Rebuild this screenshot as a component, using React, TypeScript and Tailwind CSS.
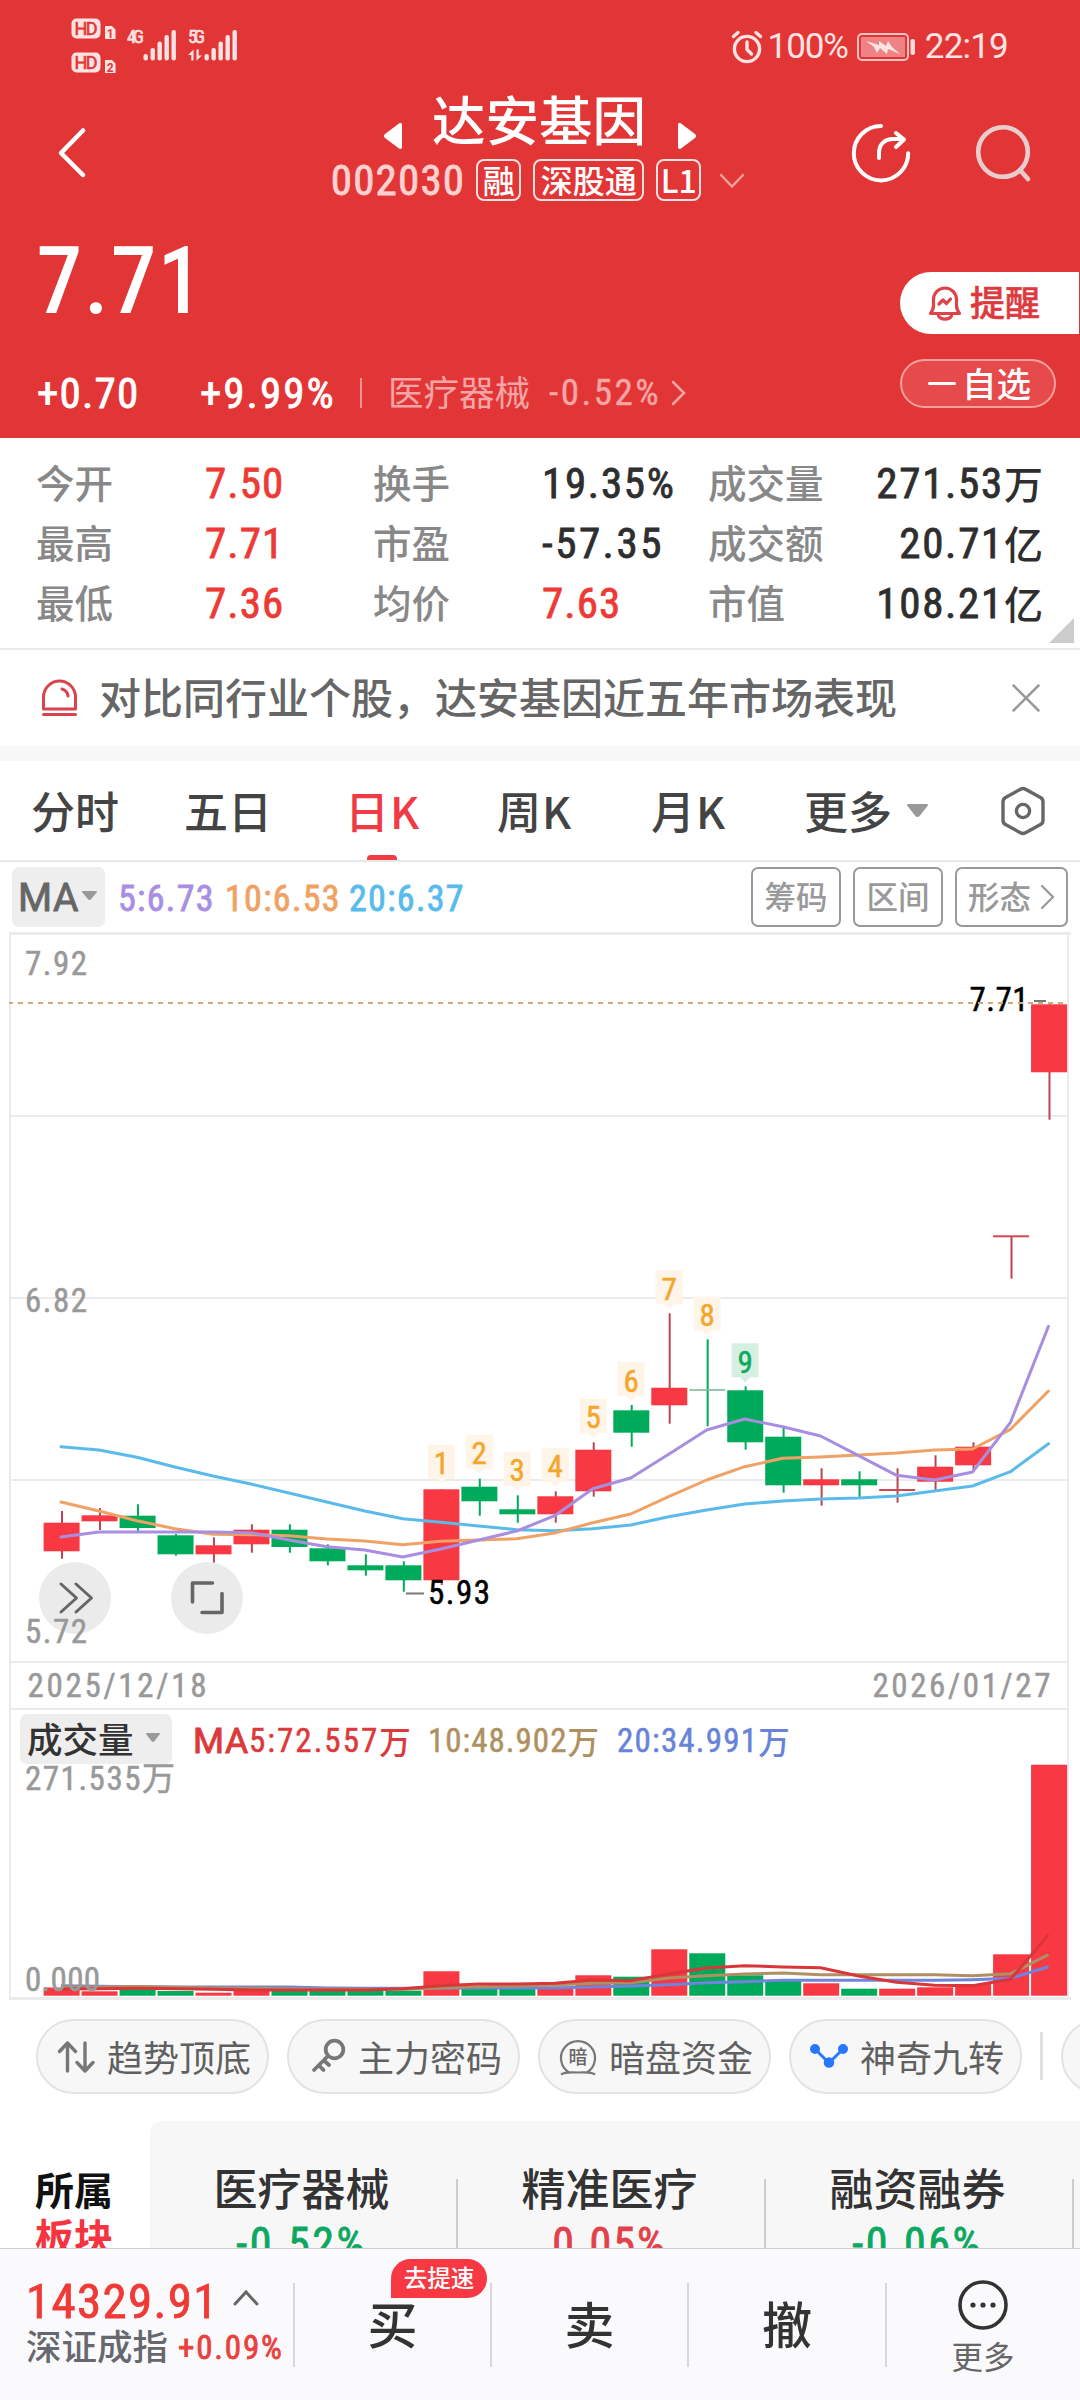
import type { ReactNode } from 'react'

const CJK = "font-['Noto_Sans_CJK_SC',sans-serif]"
const NUM = "font-['Roboto_Condensed','Noto_Sans_CJK_SC',sans-serif] [-webkit-text-stroke:0.8px]"

const RED = '#f83842'
const GREEN = '#00aa5b'

/* Candle: [direction, body top, body bottom, wick top, wick bottom, volume top] */
type Candle = ['r' | 'g', number, number, number, number, number]
const candles: Candle[] = [
  ['r', 1522.7, 1551.3, 1511, 1558.7, 1987.5],
  ['r', 1515.3, 1521.3, 1508, 1530, 1991.3],
  ['g', 1515.7, 1528, 1504.3, 1531.7, 1989],
  ['g', 1535.3, 1554.3, 1534, 1555.7, 1991],
  ['r', 1545.3, 1554.3, 1537.3, 1562.7, 1992.7],
  ['r', 1529.7, 1544.3, 1524.3, 1552.7, 1989],
  ['g', 1529.7, 1547, 1524.3, 1552.7, 1990.7],
  ['g', 1548.3, 1561.3, 1544.3, 1565.3, 1991],
  ['g', 1565.3, 1570.3, 1554.3, 1575.7, 1991],
  ['g', 1565.3, 1580.3, 1561.3, 1591.7, 1990.7],
  ['r', 1489.3, 1580.3, 1489.3, 1585, 1971.3],
  ['g', 1486.7, 1501.3, 1478.7, 1515.7, 1989],
  ['g', 1509.3, 1514.3, 1495.3, 1522.7, 1987.5],
  ['r', 1496.3, 1514.3, 1491.3, 1522.7, 1986.7],
  ['r', 1449.7, 1491.3, 1442.3, 1496.7, 1975.3],
  ['g', 1410.3, 1432.7, 1405, 1446.7, 1976.7],
  ['r', 1387.7, 1405.3, 1313.3, 1423.7, 1949.3],
  ['g', 1389.2, 1390.8, 1339.3, 1426.3, 1953.3],
  ['g', 1390.3, 1442.3, 1386.3, 1449.7, 1975.3],
  ['g', 1436.7, 1485.3, 1425.7, 1492.7, 1980],
  ['r', 1479.3, 1485.3, 1468.3, 1505.7, 1983.3],
  ['g', 1479.3, 1485.3, 1471.3, 1497.3, 1988.7],
  ['r', 1489, 1491, 1468.3, 1502.7, 1988.7],
  ['r', 1466.7, 1481.7, 1455.3, 1490, 1987.3],
  ['r', 1446.7, 1465.3, 1442.3, 1470, 1984],
  ['r', 1235.3, 1237.3, 1236, 1278.7, 1954.3],
  ['r', 1004.3, 1072.3, 1004.3, 1119.7, 1764.7],
]

const ma20 = [1446.7, 1450, 1457.3, 1467, 1476, 1484, 1493, 1502, 1511, 1518.7, 1522.3, 1526, 1529.7, 1530.7, 1528.7, 1525, 1516.7, 1510, 1504, 1501, 1499, 1498, 1496, 1491, 1486, 1471.7, 1443.7]
const ma10 = [1502, 1511, 1520.7, 1528.7, 1534.3, 1534.7, 1535.7, 1539, 1541, 1544.7, 1541.3, 1540, 1538.7, 1533, 1522.7, 1514, 1496.7, 1480, 1466.7, 1458.3, 1457, 1455, 1453, 1450, 1449, 1429.3, 1391]
const ma5 = [1537, 1532, 1532, 1532, 1532, 1532.7, 1540, 1546.7, 1550, 1557, 1549, 1540, 1531, 1515.7, 1488.7, 1478, 1454.3, 1430, 1419, 1426.7, 1436, 1455.7, 1475.3, 1480, 1472, 1422.3, 1326.3]

const vol5 = [1989, 1988.7, 1988.3, 1988.7, 1989.3, 1990, 1990, 1990, 1990, 1988.7, 1985.7, 1984, 1984, 1983.3, 1980, 1980.7, 1974, 1968, 1965.7, 1967, 1967.7, 1976, 1982.3, 1985.3, 1985.7, 1979.3, 1934.7]
const vol10 = [1987, 1987, 1986.5, 1987.3, 1988, 1988.3, 1988.7, 1989, 1989.3, 1989.3, 1988, 1986.7, 1986, 1985, 1983.3, 1982.7, 1978, 1975.7, 1974, 1973, 1974.7, 1974.7, 1974.7, 1974.7, 1975.7, 1973.7, 1954.7]
const vol20 = [1985.7, 1986.3, 1986.7, 1987, 1987, 1987, 1987, 1988, 1988.3, 1988.3, 1988.3, 1988, 1988, 1988, 1987, 1986, 1984.7, 1982.7, 1981.7, 1980.3, 1980.3, 1980.3, 1980.3, 1980.3, 1979.7, 1978.3, 1966.7]

const cx = (i: number) => 62 + i * 37.98
const line = (ys: number[]) => ys.map((y, i) => `${cx(i) - 1},${y}`).join(' ')

/* Nine-turn counter tags: [candle index, label, top] */
const tags: [number, string, number][] = [
  [10, '1', 1445.3], [11, '2', 1435.3], [12, '3', 1452.3], [13, '4', 1448.3], [14, '5', 1399.3],
  [15, '6', 1362.7], [16, '7', 1270.7], [17, '8', 1297], [18, '9', 1343.7],
]

function SvgNum({ x, y, w, size = 33, fill = '#999', anchor, children }: { x: number; y: number; w?: number; size?: number; fill?: string; anchor?: 'middle'; children: string }) {
  return (
    <text x={x} y={y} textLength={w} fontSize={size} fill={fill} stroke={fill} strokeWidth={0.5} textAnchor={anchor} className="font-['Roboto_Condensed','Noto_Sans_CJK_SC',sans-serif]">
      {children}
    </text>
  )
}

function Caret({ w, h, color = '#999' }: { w: number; h: number; color?: string }) {
  return (
    <svg width={w} height={h} viewBox="0 0 20 13" preserveAspectRatio="none" fill={color}>
      <path d="M1 0h18c1 0 1.3 1 .7 1.8L12 12c-1 1.2-3 1.2-4 0L.3 1.8C-.3 1 0 0 1 0z" />
    </svg>
  )
}

function SignalBars({ x }: { x: number }) {
  const tops = [55, 49, 42.5, 36, 31]
  return (
    <>
      {tops.map((t, i) => (
        <rect key={i} x={x + i * 7} y={t} width={4.4} height={61.5 - t} rx={2} />
      ))}
    </>
  )
}

function StatusBar() {
  return (
    <div className="flex h-[90px] items-center pl-[70px] pr-[72px] pt-[4px] text-[#ffe3e3]">
      <svg className="mt-[-2px]" width="172" height="60" viewBox="70 17 172 60" fill="#ffe3e3">
        <rect x="71.500" y="19.500" width="29" height="20" rx="5" />
        <rect x="71.500" y="53.500" width="29" height="20" rx="5" />
        <g className="font-['Roboto']" fill="#e23636" stroke="#e23636" strokeWidth="0.600">
          <text x="74.500" y="36" fontSize="18" textLength="23">HD</text>
          <text x="74.500" y="70" fontSize="18" textLength="23">HD</text>
        </g>
        <path d="M105 27h7l3.500 3.500v9.500h-10.500zM105 61h7l3.500 3.500v9.500h-10.500z" />
        <text x="106.800" y="38.500" fontSize="12" fontWeight="700" fill="#e23636" className="font-['Roboto']">1</text>
        <text x="106.800" y="72.500" fontSize="12" fontWeight="700" fill="#e23636" className="font-['Roboto']">2</text>
        <g className="font-['Roboto_Condensed']" stroke="#ffe3e3" strokeWidth="0.600">
          <text x="127" y="44.300" fontSize="18.500" textLength="17">4G</text>
          <text x="188" y="44.300" fontSize="18.500" textLength="17">5G</text>
        </g>
        <SignalBars x={143.500} />
        <SignalBars x={204.500} />
        <path d="M188 56l5.500-5.500v11h-2.200v-5.500zM202 56.500l-5.500 5v-11h2.200v6z" />
      </svg>
      <div className="ml-auto flex items-center">
        <svg width="32" height="34" viewBox="0 0 32 34" fill="none" stroke="#ffe3e3" strokeWidth="3.400" strokeLinecap="round">
          <circle cx="16" cy="19" r="12.600" />
          <path d="M16 12v7.500l4.500 4.500M2.500 6.500l4.500-4M29.500 6.500l-4.500-4" />
        </svg>
        <span className="ml-[5px] font-['Roboto'] text-[35px] leading-[40px] tracking-[-1.1px]">100%</span>
        <svg className="ml-[9px]" width="59" height="30" viewBox="0 0 59 30">
          <rect x="1" y="2" width="50" height="26" rx="4" fill="none" stroke="#f9c2c2" strokeWidth="2" />
          <rect x="4" y="5" width="44" height="20" rx="1" fill="#ee8285" />
          <path d="M9 9l13 4 0-4 7 5 2-5 4 6 8 7-12-5-1 5-7-6-3 5-3-6z" fill="#ffe3e3" />
          <rect x="53.500" y="7" width="4.500" height="16" rx="2" fill="#ffd9d9" />
        </svg>
        <span className="ml-[9px] font-['Roboto'] text-[35px] leading-[40px] tracking-[-0.8px]">22:19</span>
      </div>
    </div>
  )
}

function Badge({ w, children }: { w: string; children: ReactNode }) {
  return (
    <span className={`flex h-[42px] shrink-0 items-center justify-center rounded-[8px] border-2 border-[#ffe0e0] pb-[3px] text-[32px] font-medium leading-[36px] text-white ${w} ${CJK}`}>
      {children}
    </span>
  )
}

function NavBar() {
  return (
    <div className="flex h-[115px] text-white">
      <div className="w-[300px] pl-[56px] pt-[36px]">
        <svg width="32" height="54" viewBox="0 0 32 54" fill="none" stroke="#fff" strokeWidth="4.500" strokeLinecap="round" strokeLinejoin="round">
          <path d="M27 4.500L5 27l22 22" />
        </svg>
      </div>
      <div className="flex flex-1 flex-col items-center">
        <div className="flex h-[64px] items-center">
          <svg className="mt-[27px]" width="18" height="26" viewBox="0 0 18 26" fill="#fff"><path d="M18 2v22c0 2-1.500 2.500-3 1.500L1 15c-1.300-1.200-1.300-2.800 0-4L15 .5c1.500-1 3-.5 3 1.500z" /></svg>
          <h1 className={`ml-[30px] mr-[32px] mt-[-8px] text-[53.500px] font-medium leading-[60px] ${CJK}`}>达安基因</h1>
          <svg className="mt-[27px]" width="18" height="26" viewBox="0 0 18 26" fill="#fff"><path d="M0 2v22c0 2 1.500 2.500 3 1.500L17 15c1.300-1.200 1.300-2.800 0-4L3 .5C1.500-.5 0 0 0 2z" /></svg>
        </div>
        <div className="mt-[5px] flex h-[42px] items-center whitespace-nowrap pr-[4px]">
          <span className={`text-[43px] leading-[42px] tracking-[1.2px] text-[#ffd0d0] ${NUM}`}>002030</span>
          <div className="ml-[11px] flex gap-[12px]">
            <Badge w="w-[45px]">融</Badge>
            <Badge w="w-[111px]">深股通</Badge>
            <Badge w="w-[45px]">L1</Badge>
          </div>
          <svg className="ml-[18px] mt-[1px]" width="26" height="16" viewBox="0 0 26 16" fill="none" stroke="#f6a0a0" strokeWidth="2.500" strokeLinecap="round"><path d="M2 2l11 11.500L24 2" /></svg>
        </div>
      </div>
      <div className="flex w-[300px] pl-[69px] pt-[31px]">
        <svg width="64" height="64" viewBox="849 121 64 64" fill="none" stroke="#fff" strokeWidth="4" strokeLinecap="round" strokeLinejoin="round">
          <path d="M881 126a27.200 27.200 0 1 0 27.200 27.200M879 158v-5c0-9 6-14 14-14h10.500M896 133l8 6.500-8 7.500" />
        </svg>
        <svg className="ml-[60px]" width="62" height="64" viewBox="973 121 62 64" fill="none" stroke="#e8cdce" strokeWidth="4.600" strokeLinecap="round">
          <circle cx="1003" cy="152" r="24.800" />
          <path d="M1020 170l8 9" />
        </svg>
      </div>
    </div>
  )
}

function PriceBlock() {
  return (
    <div className="flex h-[233px] text-white">
      <div className="flex-1 pl-[37px]">
        <div className="pt-[25px] font-['Roboto_Condensed',sans-serif] text-[90px] leading-[104px] tracking-[3px] [-webkit-text-stroke:2px]">7.71</div>
        <div className="mt-[35px] flex h-[48px] items-center whitespace-nowrap">
          <span className={`w-[163px] text-[43px] leading-[48px] tracking-[1.2px] ${NUM}`}>+0.70</span>
          <span className={`w-[160px] text-[43px] leading-[48px] tracking-[2px] ${NUM}`}>+9.99%</span>
          <span className="h-[30px] w-[2px] bg-[#f09090]" />
          <span className={`ml-[26px] mt-[-4px] text-[35.500px] leading-[48px] text-[#f6a5a6] ${CJK}`}>医疗器械</span>
          <span className="ml-[19px] font-['Roboto_Condensed',sans-serif] text-[37px] leading-[48px] tracking-[2.5px] text-[#f6a5a6] [-webkit-text-stroke:0.4px]">-0.52%</span>
          <svg className="ml-[10px]" width="16" height="26" viewBox="0 0 16 26" fill="none" stroke="#f6a5a6" strokeWidth="2.500" strokeLinecap="round"><path d="M2 2l11 11L2 24" /></svg>
        </div>
      </div>
      <div className="w-[180px] pt-[67px]">
        <button className="flex h-[62px] w-[179px] items-center rounded-l-full bg-white pl-[28px]">
          <svg width="34" height="36" viewBox="0 0 34 36" fill="none" stroke="#dd4348" strokeWidth="3.200" strokeLinecap="round" strokeLinejoin="round">
            <path d="M2.500 28.500h29c-2-2.500-3-5-3-8.500v-5.500a11.500 11.500 0 0 0-23 0V20c0 3.500-1 6-3 8.500z" />
            <path d="M11 19l4-4 3.500 3.500 4-4.500M10.500 31a7 5 0 0 0 13 0" />
          </svg>
          <span className={`ml-[8px] mt-[-4px] text-[35px] font-medium leading-[50px] text-[#dc3a3e] [-webkit-text-stroke:0.500px] ${CJK}`}>提醒</span>
        </button>
        <button className="mt-[25px] flex h-[49px] w-[156px] items-center rounded-full border-2 border-[#f3a0a0] bg-[#e64a4a] pl-[26px]">
          <span className="h-[3.500px] w-[28px] rounded-full bg-white" />
          <span className={`ml-[6px] mt-[-4px] text-[34.500px] font-medium leading-[42px] ${CJK}`}>自选</span>
        </button>
      </div>
    </div>
  )
}

const quotes = [
  ['今开', '7.50', '换手', '19.35%', '成交量', '271.53万'],
  ['最高', '7.71', '市盈', '-57.35', '成交额', '20.71亿'],
  ['最低', '7.36', '均价', '7.63', '市值', '108.21亿'],
]

function QuoteTable() {
  return (
    <div className="relative h-[212px] border-b-2 border-[#ebebeb] pt-[15px]">
      {quotes.map((q, r) => (
        <div key={q[0]} className="flex h-[60px] whitespace-nowrap pl-[36px] pr-[37px] text-[43px] leading-[60px] tracking-[1.7px] text-[#2e2e2e]">
          <span className={`mt-[-2px] w-[169px] text-[38.500px] font-medium tracking-normal text-[#888] ${CJK}`}>{q[0]}</span>
          <span className={`w-[168px] tracking-[1.1px] text-[#ee3a35] ${NUM}`}>{q[1]}</span>
          <span className={`mt-[-2px] w-[169px] text-[38.500px] font-medium tracking-normal text-[#888] ${CJK}`}>{q[2]}</span>
          {r === 0 && <span className={`w-[166px] ${NUM}`}>{q[3]}</span>}
          {r === 1 && <span className={`w-[166px] tracking-[2.500px] ${NUM}`}>{q[3]}</span>}
          {r === 2 && <span className={`w-[166px] tracking-[1.1px] text-[#ee3a35] ${NUM}`}>{q[3]}</span>}
          <span className={`mt-[-2px] text-[38.500px] font-medium tracking-normal text-[#888] ${CJK}`}>{q[4]}</span>
          <span className="ml-auto flex items-center">
            <span className={NUM}>{q[5].slice(0, -1)}</span>
            <span className={`mt-[-2px] text-[39px] font-medium tracking-normal ${CJK}`}>{q[5].slice(-1)}</span>
          </span>
        </div>
      ))}
      <svg className="absolute bottom-[5px] right-[6px]" width="25" height="25" viewBox="0 0 25 25" fill="#ccc"><path d="M25 0v25H0z" /></svg>
    </div>
  )
}

function NoticeBar() {
  return (
    <div className="flex h-[96px] items-center pl-[40px] pr-[39px]">
      <svg width="39" height="40" viewBox="0 0 39 40" fill="none" stroke="#d9434c" strokeWidth="3" strokeLinecap="round" strokeLinejoin="round">
        <path d="M3.500 31V19a16 16 0 0 1 32 0v12zM3.500 36.500h32M22 11c3.500 1 5.500 3 6 7" />
      </svg>
      <span className={`ml-[20px] mt-[-5px] whitespace-nowrap text-[42px] font-medium leading-[60px] text-[#666] ${CJK}`}>对比同行业个股，达安基因近五年市场表现</span>
      <svg className="ml-auto" width="30" height="30" viewBox="0 0 30 30" fill="none" stroke="#999" strokeWidth="2.500" strokeLinecap="round"><path d="M2.500 2.500l25 25M27.500 2.500l-25 25" /></svg>
    </div>
  )
}

function PeriodTabs() {
  const tab = `text-[44px] font-medium leading-[64px] ${CJK}`
  return (
    <div className="flex h-[101px] items-center whitespace-nowrap border-b-2 border-[#e8e8e8] pl-[31px] text-[#444]">
      <span className={`mt-[-2px] w-[153px] ${tab}`}>分时</span>
      <span className={`mt-[-2px] w-[161px] ${tab}`}>五日</span>
      <span className={`relative mt-[-2px] w-[152px] tracking-[1px] text-[#f03a44] ${tab}`}>
        日K
        <i className="absolute left-[22px] top-[77px] h-[5px] w-[30px] rounded-t-sm bg-[#f03a44]" />
      </span>
      <span className={`mt-[-2px] w-[154px] tracking-[1px] ${tab}`}>周K</span>
      <span className={`mt-[-2px] w-[153px] tracking-[1px] ${tab}`}>月K</span>
      <span className={`mt-[-2px] w-[103px] ${tab}`}>更多</span>
      <Caret w={21} h={13} />
      <svg className="ml-[72px]" width="46" height="50" viewBox="0 0 46 50" fill="none" stroke="#666" strokeWidth="3.400" strokeLinejoin="round">
        <path d="M20.500 3.200Q23 1.800 25.500 3.200L40.500 11.400Q43 12.800 43 15.600V34.400Q43 37.200 40.500 38.600L25.500 46.800Q23 48.200 20.500 46.800L5.500 38.600Q3 37.200 3 34.400V15.600Q3 12.800 5.500 11.400z" />
        <circle cx="23" cy="25" r="6.600" />
      </svg>
    </div>
  )
}

function MaBar() {
  const btn = `flex h-[60px] items-center justify-center rounded-[7px] border-2 border-[#999] pb-[4px] text-[31.500px] font-medium leading-[44px] text-[#999] ${CJK}`
  return (
    <div className="flex h-[70px] items-start whitespace-nowrap pl-[12px] pr-[12px] pt-[5px]">
      <div className="flex h-[60px] w-[93px] items-center rounded-[7px] bg-[#eee] pl-[6px]">
        <span className="pt-[2px] font-['Roboto'] text-[39px] leading-[58px] tracking-[0.500px] text-[#666] [-webkit-text-stroke:0.9px]">MA</span>
        <span className="ml-[3px] mt-[-3px]"><Caret w={15} h={9} /></span>
      </div>
      <span className={`ml-[13px] w-[107px] pt-[2px] text-[36px] leading-[60px] tracking-[1.3px] text-[#a98ee3] ${NUM}`}>5:6.73</span>
      <span className={`w-[124px] pt-[2px] text-[36px] leading-[60px] tracking-[1.3px] text-[#f0a164] ${NUM}`}>10:6.53</span>
      <span className={`pt-[2px] text-[36px] leading-[60px] tracking-[1.3px] text-[#57bbee] ${NUM}`}>20:6.37</span>
      <div className="ml-auto flex gap-[12px]">
        <button className={`w-[90px] ${btn}`}>筹码</button>
        <button className={`w-[90px] ${btn}`}>区间</button>
        <button className={`w-[113px] ${btn}`}>
          形态
          <svg className="ml-[9px] mt-[4px]" width="15" height="26" viewBox="0 0 15 26" fill="none" stroke="#999" strokeWidth="2.200" strokeLinecap="round"><path d="M2 2l11 11L2 24" /></svg>
        </button>
      </div>
    </div>
  )
}

function KChart() {
  return (
    <svg className="block" width="1080" height="779" viewBox="0 932 1080 779">
      <g fill="#ebebeb">
        <rect x="9" y="932" width="1062" height="3" />
        <rect x="9" y="932" width="2" height="779" />
        <rect x="1067" y="932" width="2" height="779" />
        {[1115, 1297, 1479, 1661, 1708].map((y) => (
          <rect key={y} x="9" y={y} width="1059" height="2" />
        ))}
      </g>
      <SvgNum x={25} y={975} w={62}>7.92</SvgNum>
      <SvgNum x={25} y={1312} w={62}>6.82</SvgNum>
      <SvgNum x={969.500} y={1011} w={59} fill="#000">7.71</SvgNum>
      <line x1="9" x2="1068" y1="1003" y2="1003" stroke="#c9ad7f" strokeWidth="2" strokeDasharray="5 5" strokeDashoffset="1" />
      <rect x="1034" y="1000" width="12" height="2" fill="#777" />
      {tags.map(([i, label, top]) => {
        const green = label === '9'
        return (
          <g key={label}>
            <path d={`M${cx(i) - 14} ${top - 0.5}h27v34h-8.500l-5 5-5-5h-8.500z`} fill={green ? '#d5f0e2' : '#fef4e8'} />
            <SvgNum x={cx(i) - 0.5} y={top + 29} size={31} anchor="middle" fill={green ? '#10a860' : '#f5a62c'}>{label}</SvgNum>
          </g>
        )
      })}
      {candles.map(([d, bt, bb, wt, wb], i) => (
        <g key={i}>
          <rect x={cx(i) - 1} y={wt} width={2} height={wb - wt} fill={d === 'r' ? '#b8474f' : GREEN} />
          <rect x={cx(i) - 18.4} y={bt} width={36} height={bb - bt} fill={i === 17 ? '#7fb99c' : bb - bt < 3 ? '#cf4a52' : d === 'r' ? RED : GREEN} />
        </g>
      ))}
      <g fill="none" strokeWidth="3" strokeLinejoin="round" strokeLinecap="round">
        <polyline points={line(ma20)} stroke="#5abbea" />
        <polyline points={line(ma10)} stroke="#f0a266" />
        <polyline points={line(ma5)} stroke="#a78ee0" />
      </g>
      <rect x="406" y="1592.500" width="18" height="2" fill="#777" />
      <SvgNum x={428} y={1604} w={62} fill="#000">5.93</SvgNum>
      <circle cx="75" cy="1598" r="36" fill="#ebebeb" />
      <circle cx="207" cy="1598" r="36" fill="#ebebeb" />
      <g fill="none" stroke="#666" strokeWidth="3" strokeLinecap="round" strokeLinejoin="round">
        <path d="M61 1584l15.500 14-15.500 14M76 1584l15.500 14-15.500 14" />
        <path d="M192.500 1602v-19h20M202 1612.500h20v-19" strokeWidth="3.600" />
      </g>
      <SvgNum x={25} y={1643} w={62}>5.72</SvgNum>
      <SvgNum x={27.500} y={1697} w={179}>2025/12/18</SvgNum>
      <SvgNum x={872.500} y={1697} w={178}>2026/01/27</SvgNum>
    </svg>
  )
}

function VolumeHeader() {
  const n = "flex items-center font-['Roboto_Condensed','Noto_Sans_CJK_SC',sans-serif] text-[33px] leading-[50px] [-webkit-text-stroke:0.500px]"
  const wan = `${CJK} mt-[-2px] text-[31.500px] tracking-normal font-medium [-webkit-text-stroke:0]`
  return (
    <div className="ml-[9px] flex h-[53px] w-[1060px] items-start whitespace-nowrap border-x-2 border-[#ebebeb] pl-[9px] pt-[3px]">
      <div className="flex h-[50px] w-[152px] items-center rounded-[7px] bg-[#eee] pl-[7px]">
        <span className={`mt-[-3px] text-[35.500px] font-medium leading-[50px] text-[#333] ${CJK}`}>成交量</span>
        <span className="ml-[12px] mt-[-3px]"><Caret w={14} h={9} /></span>
      </div>
      <span className={`ml-[21px] w-[235px] pt-[2px] tracking-[2px] text-[#dc393b] ${n}`}>
        <span className="font-['Roboto'] text-[35.500px] tracking-[0.8px] [-webkit-text-stroke:0.9px]">MA</span>5:72.557<span className={wan}>万</span>
      </span>
      <span className={`w-[189px] pt-[2px] tracking-[1px] text-[#af9161] ${n}`}>10:48.902<span className={wan}>万</span></span>
      <span className={`pt-[2px] tracking-[1.2px] text-[#6883d8] ${n}`}>20:34.991<span className={wan}>万</span></span>
    </div>
  )
}

function VolumeChart() {
  return (
    <svg className="block" width="1080" height="237" viewBox="0 1764 1080 237">
      <g fill="#ebebeb">
        <rect x="9" y="1764" width="2" height="236" />
        <rect x="1067" y="1764" width="2" height="236" />
        <rect x="9" y="1997" width="1062" height="3" />
      </g>
      {candles.map(([d, , , , , v], i) => (
        <rect key={i} x={cx(i) - 18.4} y={v} width={36} height={1995.700 - v} fill={d === 'r' ? RED : GREEN} />
      ))}
      <g fill="none" strokeWidth="3" strokeLinejoin="round">
        <polyline points={line(vol20)} stroke="#6f84dc" />
        <polyline points={line(vol10)} stroke="#b08f62" />
        <polyline points={line(vol5)} stroke="#d9363a" />
      </g>
      <SvgNum x={25} y={1790} w={150}>271.535万</SvgNum>
      <SvgNum x={25} y={1991} w={75}>0.000</SvgNum>
    </svg>
  )
}

const darkIcon = (
  <svg width="38" height="38" viewBox="0 0 38 38" fill="none" stroke="#777" strokeWidth="2.200">
    <path d="M10 34.500a17 17 0 1 1 18 0M2 36.500c5-3 9-2 17-2s12-1 17 2" />
    <text x="19" y="26" fontSize="19" textAnchor="middle" fill="#666" stroke="none" fontWeight="500" className="font-['Noto_Sans_CJK_SC']">暗</text>
  </svg>
)
const trendIcon = (
  <svg width="38" height="34" viewBox="0 0 38 34" fill="none" stroke="#777" strokeWidth="3.400" strokeLinecap="round" strokeLinejoin="round">
    <path d="M10.500 31V3M2.500 11.500L10.500 3l8 8.500M28 3v28M20 22.500L28 31l8-8.500" />
  </svg>
)
const keyIcon = (
  <svg className="mt-[-3px]" width="36" height="36" viewBox="0 0 36 36" fill="none" stroke="#777" strokeWidth="3.800" strokeLinecap="round">
    <circle cx="23.500" cy="12.500" r="8.800" />
    <path d="M17 19L3 33M8 28.500l4.500 4.500M13 23.500l5 4.500" />
  </svg>
)
const turnIcon = (
  <svg className="mt-[-2px]" width="40" height="26" viewBox="0 0 40 26" fill="#2878ff" stroke="#2878ff" strokeWidth="3">
    <path d="M6 6l14 14L34 6" fill="none" />
    <circle cx="6" cy="6" r="3.500" /><circle cx="20" cy="19.500" r="3.800" /><circle cx="34" cy="6" r="3.500" />
  </svg>
)

function Pill({ icon, label, pl }: { icon: ReactNode; label: string; pl: string }) {
  return (
    <div className={`flex h-[75px] w-[233px] shrink-0 items-center justify-between rounded-full border-2 border-[#e3e3e3] bg-[#f7f7f7] pr-[16px] ${pl}`}>
      {icon}
      <span className={`mt-[-2px] text-[36px] leading-[60px] text-[#606060] ${CJK}`}>{label}</span>
    </div>
  )
}

function ToolPills() {
  return (
    <div className="flex h-[120px] items-start gap-[18px] overflow-hidden pl-[36px] pt-[18px]">
      <Pill icon={trendIcon} label="趋势顶底" pl="pl-[19px]" />
      <Pill icon={keyIcon} label="主力密码" pl="pl-[22px]" />
      <Pill icon={darkIcon} label="暗盘资金" pl="pl-[19px]" />
      <Pill icon={turnIcon} label="神奇九转" pl="pl-[18px]" />
      <div className="mt-[13px] h-[48px] w-[3px] shrink-0 bg-[#e0e0e0]" />
      <div className="h-[75px] w-[233px] shrink-0 rounded-full border-2 border-[#e3e3e3] bg-[#f7f7f7]" />
    </div>
  )
}

const sectors = [
  { name: '医疗器械', change: '-0.52%', up: false },
  { name: '精准医疗', change: '0.05%', up: true },
  { name: '融资融券', change: '-0.06%', up: false },
]

function Sectors() {
  return (
    <div className="flex h-[127px] overflow-hidden">
      <div className={`w-[150px] pl-[35px] pt-[44px] text-[39px] font-bold leading-[47px] text-[#111] ${CJK}`}>
        <div>所属</div>
        <div className="text-[#f5343f]">板块</div>
      </div>
      <div className="flex h-[300px] flex-1 overflow-hidden rounded-tl-[12px] bg-[#f7f7f7]">
        {sectors.map((s) => (
          <div key={s.name} className="relative flex w-[308px] shrink-0 flex-col items-center pr-[5px] pt-[34px]">
            <span className={`text-[44px] font-medium leading-[64px] text-[#333] ${CJK}`}>{s.name}</span>
            <span className={s.up ? `mt-[-1px] text-[44px] leading-[52px] tracking-[2px] text-[#e2414b] ${NUM}` : `mt-[-1px] text-[44px] leading-[52px] tracking-[2.500px] text-[#0da762] ${NUM}`}>{s.change}</span>
            <i className="absolute right-0 top-[58px] h-[100px] w-[2px] bg-[#ccc]" />
          </div>
        ))}
      </div>
    </div>
  )
}

function TradeBar() {
  const cell = `relative flex items-center justify-center pb-[5px] text-[50px] font-medium leading-[60px] text-[#333] ${CJK}`
  const sep = 'mt-[34px] h-[84px] w-[2px] shrink-0 bg-[#d8d8dc]'
  return (
    <div className="flex h-[152px] border-t border-[#cfcfd2] bg-[#fafafc]">
      <div className="w-[293px] whitespace-nowrap pl-[26px] pt-[28px]">
        <div className="flex h-[50px] items-center">
          <span className={`text-[49px] leading-[50px] tracking-[1.3px] text-[#f03a36] ${NUM}`}>14329.91</span>
          <svg className="ml-[13px] mt-[-10px]" width="28" height="18" viewBox="0 0 28 18" fill="none" stroke="#666" strokeWidth="3" strokeLinecap="round"><path d="M3 16L14 4l11 12" /></svg>
        </div>
        <div className="mt-[-1px] flex h-[44px] items-center">
          <span className={`mt-[-6px] w-[152px] text-[35.500px] font-medium leading-[44px] text-[#66686e] ${CJK}`}>深证成指</span>
          <span className={`text-[33px] leading-[44px] tracking-[1.8px] text-[#e8413e] ${NUM}`}>+0.09%</span>
        </div>
      </div>
      <div className={sep} />
      <div className={`w-[195px] ${cell}`}>
        买
        <span className="absolute left-[96px] top-[10px] flex h-[39px] w-[96px] items-center justify-center rounded-full rounded-bl-[3px] bg-[#f83842] pb-[3px] text-[23.500px] leading-[30px] text-white">去提速</span>
      </div>
      <div className={sep} />
      <div className={`w-[195px] ${cell}`}>卖</div>
      <div className={sep} />
      <div className={`w-[196px] ${cell}`}>撤</div>
      <div className={sep} />
      <div className="flex flex-1 flex-col items-center pr-[1px] pt-[31px]">
        <svg width="50" height="50" viewBox="0 0 50 50" fill="#333">
          <circle cx="25" cy="25" r="23" fill="none" stroke="#333" strokeWidth="3.600" />
          <circle cx="15" cy="25" r="2.600" /><circle cx="25" cy="25" r="2.600" /><circle cx="35" cy="25" r="2.600" />
        </svg>
        <span className={`mt-[3px] text-[31.500px] leading-[44px] text-[#666] ${CJK}`}>更多</span>
      </div>
    </div>
  )
}

export default function App() {
  return (
    <div className="flex h-[2400px] w-[1080px] flex-col overflow-hidden bg-white">
      <header className="h-[438px] bg-[#e23636]">
        <StatusBar />
        <NavBar />
        <PriceBlock />
      </header>
      <QuoteTable />
      <NoticeBar />
      <div className="h-[15px] bg-[#f7f7f7]" />
      <PeriodTabs />
      <MaBar />
      <KChart />
      <VolumeHeader />
      <VolumeChart />
      <ToolPills />
      <Sectors />
      <TradeBar />
    </div>
  )
}
